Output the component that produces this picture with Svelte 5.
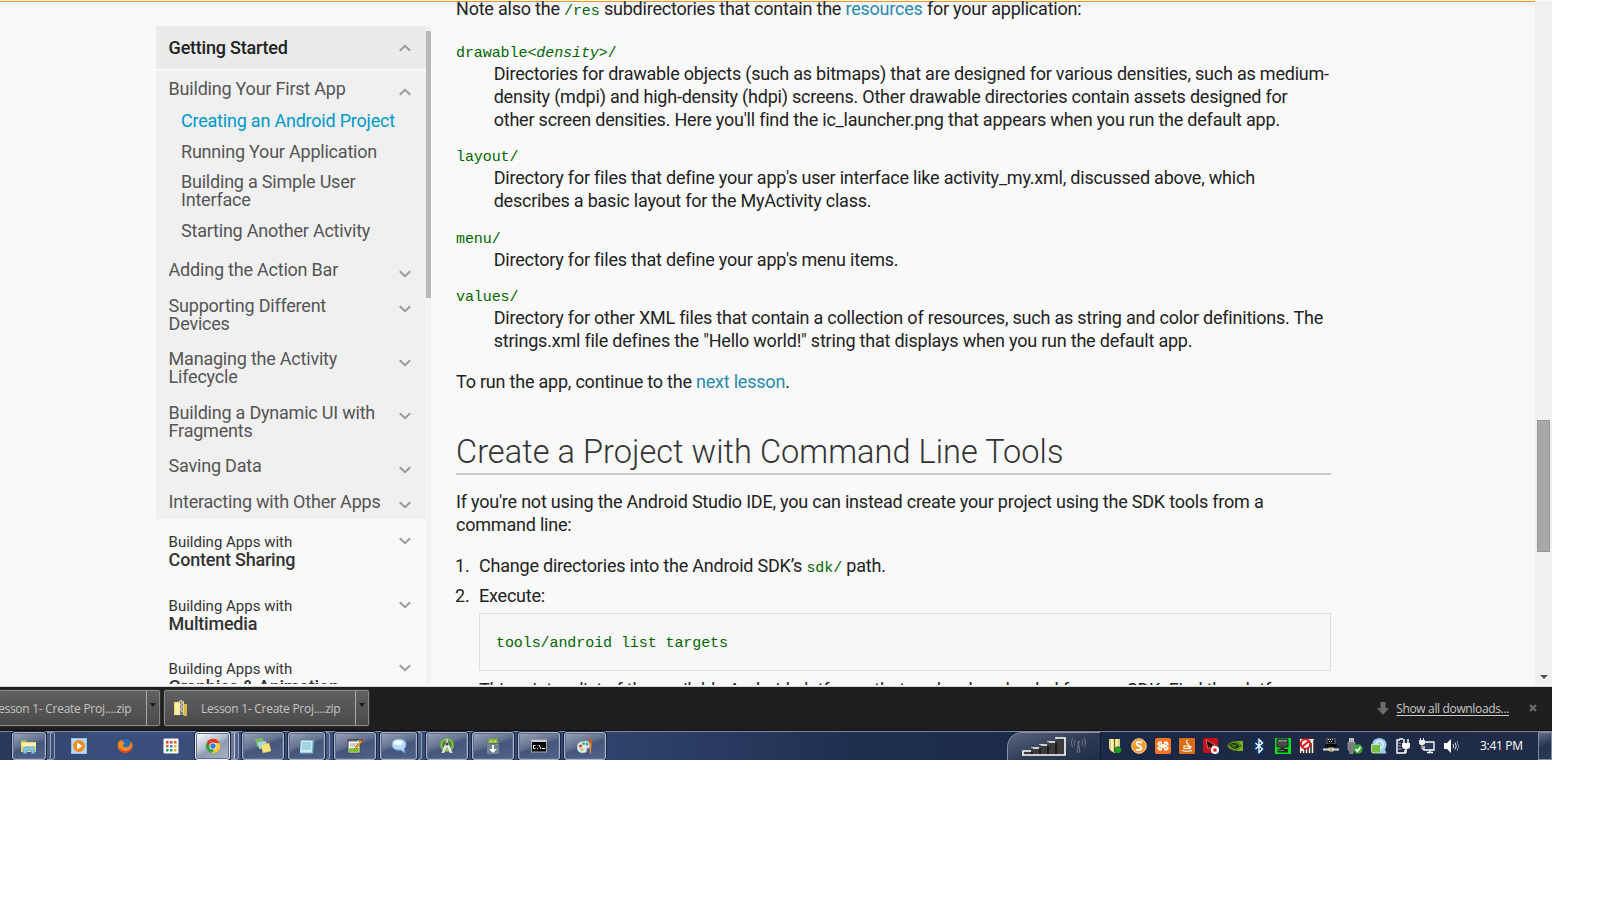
<script>
  const lessons = [
    { text: 'Creating an Android Project', active: true },
    { text: 'Running Your Application' },
    { text: 'Building a Simple User Interface' },
    { text: 'Starting Another Activity' }
  ];
  const topics = [
    'Adding the Action Bar',
    'Supporting Different Devices',
    'Managing the Activity Lifecycle',
    'Building a Dynamic UI with Fragments',
    'Saving Data',
    'Interacting with Other Apps'
  ];
  const sections = ['Content Sharing', 'Multimedia', 'Graphics & Animation'];

  const icons = {
    explorer: '<path d="M0 3h5l1 1h9v10H0z" fill="#e9d47c"/><path d="M1 2h4v2H1z" fill="#8fc25a"/><path d="M1 5h14v3H1z" fill="#fbf0b8"/><path d="M2.500 15.500v-4q0-2.500 2-2.500h7q2 0 2 2.500v4h-3v-3h-5v3z" fill="#7cc8f0" stroke="#4a9ccc" stroke-width=".6"/>',
    wmp: '<rect width="16" height="16" fill="#8fc3ea"/><rect x="1" y="1" width="14" height="14" fill="#b9dcf4"/><circle cx="8" cy="8" r="6" fill="#f58a1c"/><path d="M6 4.500l5.500 3.500L6 11.500z" fill="#fff"/>',
    firefox: '<circle cx="8" cy="8" r="7" fill="#e3641b"/><circle cx="8.500" cy="6" r="5.200" fill="#2b6db5"/><path d="M1 5Q3 1 5 3q2 1 3 3-3 0-2 2 2 2 5 1 3-2 3-6 3 5 0 9-4 4-9 2Q0 11 1 5z" fill="#f08a24"/><path d="M2 9q3 5 8 4 4-1 5-5 0 7-7 7-5 0-6-6z" fill="#d6401c"/>',
    apps: '<rect x=".5" y=".5" width="15" height="15" rx="1" fill="#fafafa"/><g><path d="M3 3h2.500v2.500H3zM7 3h2.500v2.500H7z" fill="#e53a2e"/><path d="M11 3h2.500v2.500H11zM3 7h2.500v2.500H3z" fill="#ec5b31"/><path d="M7 7h2.500v2.500H7z" fill="#3a7bea"/><path d="M11 7h2.500v2.500H11z" fill="#f2b51b"/><path d="M3 11h2.500v2.500H3zM7 11h2.500v2.500H7z" fill="#23a257"/><path d="M11 11h2.500v2.500H11z" fill="#f2b51b"/></g>',
    chrome: '<circle cx="8" cy="8" r="7.200" fill="#f6ca2c"/><path d="M1.800 4.400A7.200 7.200 0 0 1 14.600 5H8L5 9z" fill="#dc3c2d"/><path d="M1.800 4.400A7.200 7.200 0 0 0 7 15.100L10 10 6 10z" fill="#35a048"/><circle cx="8" cy="8" r="3.500" fill="#fff"/><circle cx="8" cy="8" r="2.700" fill="#3c79cf"/>',
    notes: '<path d="M0 1l8-1 1 7-7 2z" fill="#76bd68"/><path d="M3 4l8-1 1 7-8 1z" fill="#a8d4ee"/><path d="M6 7l8-2 2 8-8 2z" fill="#f4e47a" stroke="#d9c050" stroke-width=".5"/>',
    notepad: '<path d="M2 2h13l-1 13.500H1z" fill="#78b4c6"/><path d="M2 2h11.500l-.8 12.500H1z" fill="#c7edf5"/><path d="M3 5h9M3 7h9M3 9h9M3 11h9" stroke="#69aec3" stroke-width=".8"/><path d="M3 1v2M5 1v2M7 1v2M9 1v2M11 1v2M13 1v2" stroke="#587f8c" stroke-width=".8"/>',
    npp: '<rect x="1" y="2" width="12" height="13" fill="#fff" stroke="#444"/><path d="M2 1v3M4 1v3M6 1v3M8 1v3M10 1v3" stroke="#222" stroke-width=".8"/><path d="M3 6h8M3 8h7" stroke="#999"/><path d="M2 10h10v4H2z" fill="#7ec736"/><path d="M7 11l7-9 1.500 1-7 9z" fill="#f1b32d" stroke="#8a4a12" stroke-width=".5"/><path d="M13.500 2l1-2 1.500 1-1 2z" fill="#c62b24"/>',
    chat: '<path d="M8 1c5 0 7 2.500 7 5.500 0 2-1 3.500-2 4.300L14 15l-4-3C4 13 1 10 1 6.500 1 3 4 1 8 1z" fill="#b9dcfb" stroke="#6d9fd8"/><ellipse cx="7" cy="4.500" rx="4.500" ry="2.500" fill="#f2faff"/>',
    studio: '<circle cx="8" cy="7" r="7" fill="#79b944"/><circle cx="8" cy="7" r="4.500" fill="#507735"/><path d="M7 4h2l4.500 11h-2.500L8 9l-3 6H2.500z" fill="#eaeaea"/><path d="M7.200 1h1.600v3H7.200z" fill="#ddd"/><path d="M4 10q4 2.500 8 0" stroke="#ddd" fill="none"/><circle cx="8" cy="6" r="1.600" fill="#444"/>',
    sdk: '<path d="M3 5q0-4 5-4t5 4z" fill="#95c11f"/><path d="M4 0l1.500 2M12 0l-1.500 2" stroke="#95c11f"/><path d="M5.500 3h1v1h-1zM9.500 3h1v1h-1z" fill="#fff"/><rect x="2" y="6" width="12" height="10" fill="#6e8593"/><path d="M7 7h2v4h3l-4 4-4-4h3z" fill="#fff"/>',
    cmd: '<rect x=".5" y="2" width="15" height="12" fill="#050505" stroke="#aaa"/><path d="M1 2h14v2H1z" fill="#c9ccd4"/><path d="M4.500 7.500H2.500v3h2M6.500 7.500v.5M6.500 10v1M8 7l2 4M11 10.500h3" stroke="#fff" fill="none"/>',
    paint: '<path d="M8 3q6 0 6 5 0 3-3 2-2 0-1 2 0 3-4 3-6 0-6-6 0-6 8-6z" fill="#d8ebf4" stroke="#7ba9c0" stroke-width=".5"/><circle cx="3.500" cy="8" r="1.500" fill="#d33a2d"/><circle cx="6.500" cy="5.500" r="1.500" fill="#5bb446"/><circle cx="10" cy="6" r="1.500" fill="#3b8fd4"/><circle cx="5" cy="11.500" r="1.500" fill="#f0b52a"/><path d="M12.200 5h2.400L14 16h-1z" fill="#e5832b"/><path d="M12 1l1.500-1L15 1v4h-3z" fill="#b4602a"/>',
    shield: '<path d="M2 1h11v8q0 5-5 6-6-2-6-6z" fill="#e3cf7d"/><path d="M4 1h2v12H4zM9 1h1.500v9H9z" fill="#fff5c4"/><path d="M7 1h1v13H7z" fill="#7a6525"/><circle cx="11" cy="12" r="3.300" fill="#1ea02a" stroke="#085c10" stroke-width=".6"/>',
    sbadge: '<circle cx="8" cy="8" r="7.300" fill="#f79a2f" stroke="#ffd9a0"/><path d="M11 4.500Q6 3 5.500 5.500 5.500 7 8 8t2.500 2.500Q9.500 13 5 11.500" stroke="#fff" stroke-width="2" fill="none"/>',
    xampp: '<rect width="16" height="16" rx="2" fill="#f37623"/><rect x="2.500" y="3.500" width="11" height="9" rx="2.500" fill="#fff"/><path d="M7 3h2v3H7zM7 10h2v3H7zM2 7.300h2v1.400H2zM12 7.300h2v1.400h-2zM4.500 5.500h1.500v1.300H4.500zM10 5.500h1.500v1.300H10zM4.500 9.200h1.500v1.300H4.500zM10 9.200h1.500v1.300H10z" fill="#f37623"/>',
    java: '<rect width="16" height="16" rx="1" fill="#d96e19"/><path d="M8.500 2q-2 2 0 3.500t-.5 3M5 8h5v2.500H5zM10 8.500q3-.5 1.500 1.500L9.500 11M3 12.500q5 1.500 10 0" stroke="#fff" fill="none" stroke-width="1.100"/>',
    redcut: '<rect width="15" height="15" rx="2" fill="#c4121b"/><path d="M3 2l9 5-3 1 2 4-2 1-2-4-2 2z" fill="#260506" stroke="#ef8a8a" stroke-width=".7"/><circle cx="12" cy="12" r="4" fill="#fff"/><rect x="10.500" y="10.500" width="3" height="3" fill="#d11"/>',
    nvidia: '<path d="M7 3h9v10H7z" fill="#76b21a"/><path d="M0 8q3-5 8-5 4 1 6 5-3 4-6 5-5-1-8-5z" fill="#76b21a" stroke="#25351c" stroke-width=".7"/><path d="M2 8q5-6 10 0-5 5-8 0 4-3 6 0-3 2-4 0" stroke="#14240f" stroke-width="1.100" fill="none"/>',
    bt: '<ellipse cx="8" cy="8" rx="5.500" ry="7.800" fill="#0d3d6e"/><path d="M4.500 5l7 6-3.500 3.500V1.500L11.500 5l-7 6" stroke="#fff" stroke-width="1.300" fill="none"/>',
    monitor: '<rect width="16" height="16" fill="#0be21d"/><path d="M2 1h11v8H2z" fill="#4a4a4a" stroke="#222"/><path d="M3 2h9v1.500H3z" fill="#8a8a8a"/><path d="M5.500 9.500h4V11H13v3.500H2.500V11h3z" fill="#222"/><path d="M3 12h6v1H3z" fill="#777"/>',
    nosignal: '<rect x=".5" y=".5" width="15" height="15" fill="#f5f5f5" stroke="#333"/><path d="M3 15v-2M6 15v-4M9 15V8M12 15V5M15 15V2" stroke="#333" stroke-width="1.600"/><circle cx="6.500" cy="6" r="4.700" fill="#fff" stroke="#e01616" stroke-width="2"/><path d="M3 9l7-6" stroke="#e01616" stroke-width="2"/>',
    usbnet: '<path d="M4 0h8v6H4z" fill="#111" stroke="#aaa" stroke-width=".6"/><path d="M5 1h1v1H5zM7 1h1v1H7zM9 1h1v1H9zM6 3h1v1H6zM8 3h1v1H8z" fill="#fff"/><path d="M2 6h12v3H2z" fill="#070707"/><path d="M0 10.500h5l2-1h3l1 1h5v2h-5l-1 1H7l-2-1H0z" fill="#d9d9d9"/><path d="M7 10h2v3H7z" fill="#c7a640"/>',
    eject: '<path d="M2 0h5v4H2z" fill="#bbb"/><path d="M1 4h7v7q0 2-2 2v3H3v-3q-2 0-2-2z" fill="#7c7c7c" stroke="#aaa" stroke-width=".6"/><circle cx="11" cy="11" r="4.700" fill="#38a838"/><path d="M8.500 11l2 2.300 3-4.300" stroke="#fff" stroke-width="1.500" fill="none"/>',
    sync: '<path d="M8 0q7 0 7.500 6.500 0 3-1.500 5l1.500 4H9L1 7Q1 1 8 0z" fill="#9dcaf0"/><circle cx="8.500" cy="6.500" r="3.600" fill="none" stroke="#e9f6ff" stroke-width="1.500"/><path d="M0.500 6.500h8q1 0 1 1v6q0 1.500-1 1.500H2q-1.500 0-1.500-1.500z" fill="#76bd48" stroke="#d8f0c0" stroke-width=".8"/>',
    power: '<path d="M5 2H2v13h8v-3M4 1h4" stroke="#fff" stroke-width="1.400" fill="none"/><path d="M3 5h3M3 8h3M3 11h4" stroke="#aaa"/><path d="M7 5h8v3q0 3-3 3h-2q-3 0-3-3z" fill="#fff"/><path d="M9 1v4M13 1v4M11 11v4" stroke="#fff" stroke-width="1.500"/>',
    network: '<path d="M5 4h10v8H5V8" stroke="#fff" stroke-width="1.300" fill="#26375a"/><path d="M8 14.500h6M11 12v2" stroke="#fff" stroke-width="1.300"/><path d="M0 2h6v3q0 2-3 2t-3-2zM1 0h1v2H1zM4 0h1v2H4z" fill="#eee"/><path d="M3 7v4h2" stroke="#fff" fill="none"/>',
    volume: '<path d="M1 5h3l4-4v14l-4-4H1z" fill="#fff"/><path d="M10 6q1.500 2 0 4M12 4.500q2.500 3.500 0 7" stroke="#ddd" fill="none"/><path d="M14 3q3 5 0 10" stroke="#7c88a0" fill="none"/>',
    zip: '<path d="M1 2h4l1-1h5v14H1z" fill="#f3d86c"/><path d="M2 3h5v12H2z" fill="#fbeda1"/><path d="M11 4h3v12h-3z" fill="#d8b64a"/><path d="M7 0h3v15H7z" fill="#78808a"/><path d="M7 1h2M8 3h2M7 5h2M8 7h2M7 9h2M8 11h2" stroke="#e8e8e8"/>'
  };

  const buttons = [
    { icon: 'explorer', w: 34, gap: 12, stack: 'two' },
    { icon: 'wmp', w: 46, gap: 1, flat: true },
    { icon: 'firefox', w: 46, gap: 0, flat: true },
    { icon: 'apps', w: 46, gap: 0, flat: true },
    { icon: 'chrome', w: 35, gap: 1, stack: 'two', hot: true },
    { icon: 'notes', w: 42, gap: 3 },
    { icon: 'notepad', w: 37, gap: 4, stack: 'one' },
    { icon: 'npp', w: 42, gap: 4 },
    { icon: 'chat', w: 37, gap: 4, stack: 'one' },
    { icon: 'studio', w: 42, gap: 4 },
    { icon: 'sdk', w: 42, gap: 4 },
    { icon: 'cmd', w: 42, gap: 4 },
    { icon: 'paint', w: 42, gap: 4 }
  ];
  const tray = ['shield', 'sbadge', 'xampp', 'java', 'redcut', 'nvidia', 'bt', 'monitor', 'nosignal', 'usbnet', 'eject', 'sync', 'power', 'network', 'volume'];
</script>

{#snippet icon(name)}
  <svg class="icon" viewBox="0 0 16 16">{@html icons[name]}</svg>
{/snippet}

{#snippet chevron(up)}
  <svg class="chevron" class:up viewBox="0 0 12 8"><path d="M.8 1.300L6 6.200l5.200-4.900" /></svg>
{/snippet}

<div class="screen">
  <div class="browser">
    <nav>
      <div class="toc">
        <div class="head"><b>Getting Started</b>{@render chevron(true)}</div>
        <div class="open">
          <div class="topic first"><span>Building Your First App</span>{@render chevron(true)}</div>
          <ul>
            {#each lessons as l}
              <li class:active={l.active}>{l.text}</li>
            {/each}
          </ul>
          {#each topics as t}
            <div class="topic"><span>{t}</span>{@render chevron(false)}</div>
          {/each}
        </div>
        {#each sections as s}
          <div class="section">
            <div><small>Building Apps with</small><b>{s}</b></div>
            {@render chevron(false)}
          </div>
        {/each}
      </div>
      <div class="track"><div class="thumb"></div></div>
    </nav>

    <main>
      <p class="note">Note also the <code>/res</code> subdirectories that contain the <a>resources</a> for your application:</p>
      <dl>
        <dt>drawable<em>&lt;density&gt;</em>/</dt>
        <dd>Directories for drawable objects (such as bitmaps) that are designed for various densities, such as medium-<br />density (mdpi) and high-density (hdpi) screens. Other drawable directories contain assets designed for<br />other screen densities. Here you'll find the ic_launcher.png that appears when you run the default app.</dd>
        <dt>layout/</dt>
        <dd class="wide">Directory for files that define your app's user interface like activity_my.xml, discussed above, which<br />describes a basic layout for the MyActivity class.</dd>
        <dt>menu/</dt>
        <dd>Directory for files that define your app's menu items.</dd>
        <dt>values/</dt>
        <dd>Directory for other XML files that contain a collection of resources, such as string and color definitions. The<br />strings.xml file defines the "Hello world!" string that displays when you run the default app.</dd>
      </dl>
      <p class="run">To run the app, continue to the <a>next lesson</a>.</p>
      <h2>Create a Project with Command Line Tools</h2>
      <p class="intro">If you're not using the Android Studio IDE, you can instead create your project using the SDK tools from a<br />command line:</p>
      <div class="step"><i>1.</i><span>Change directories into the Android SDK’s <code>sdk/</code> path.</span></div>
      <div class="step"><i>2.</i><span>Execute:</span></div>
      <pre>tools/android list targets</pre>
      <p class="tail">This prints a list of the available Android platforms that you’ve downloaded for your SDK. Find the platform</p>
    </main>

    <div class="scrollbar">
      <div class="grip"></div>
      <svg viewBox="0 0 8 4"><path d="M0 0h8L4 4z" fill="#505050" /></svg>
    </div>
  </div>

  <div class="downloads">
    <div class="item cut">
      <span class="file">Lesson 1- Create Proj....zip</span>
      <span class="drop"><svg viewBox="0 0 6 4"><path d="M0 0h6L3 4z" fill="#1c1c1c" /></svg></span>
    </div>
    <div class="item">
      {@render icon('zip')}
      <span class="file">Lesson 1- Create Proj....zip</span>
      <span class="drop"><svg viewBox="0 0 6 4"><path d="M0 0h6L3 4z" fill="#1c1c1c" /></svg></span>
    </div>
    <div class="all">
      <svg class="arrow" viewBox="0 0 12 13"><path d="M3.500 0h5v6H12l-6 7-6-7h3.500z" fill="#6b6b6b" /></svg>
      <u>Show all downloads...</u>
      <svg class="close" viewBox="0 0 8 8"><path d="M1 1l6 6M7 1L1 7" stroke="#6e6e6e" stroke-width="2.200" /></svg>
    </div>
  </div>

  <div class="taskbar">
    {#each buttons as b}
      <div class="btn" class:flat={b.flat} class:hot={b.hot} style:width="{b.w}px" style:margin-left="{b.gap}px">{@render icon(b.icon)}</div>
      {#if b.stack}<div class="stack {b.stack}" class:hot={b.hot}></div>{/if}
    {/each}
    <div class="signal">
      <svg class="bars" viewBox="0 0 44 19">
        <path d="M1 18v-4h9v-3h8V8h8V5h8V1h9v17z" fill="#3a3a3a" stroke="#fff" stroke-width="1.600" />
        <path d="M10 11v6M18 8v9M26 5v12M34 2v15" stroke="#111" stroke-width="1.500" />
      </svg>
      <svg class="antenna" viewBox="0 0 16 16"><path d="M8 6l-1.500 9.500h3zM4.500 2.500q-2 3 0 6M11.500 2.500q2 3 0 6M2 .5q-3 5 0 10M14 .5q3 5 0 10" stroke="#68707c" stroke-width="1.100" fill="none" /><circle cx="8" cy="5" r="1.500" fill="#68707c" /></svg>
    </div>
    <div class="tray">
      {#each tray as t}{@render icon(t)}{/each}
    </div>
    <div class="clock">3:41 PM</div>
    <div class="desktop"></div>
  </div>
</div>

<style>
  :global(body) { background: #fff; overflow: hidden; }
  .screen { width: 1552px; height: 760px; display: flex; flex-direction: column; overflow: hidden; }
  .browser {
    height: 684px; flex: none; overflow: hidden; display: flex;
    background: linear-gradient(#efefef, #f9f9f9 6px);
    border-top: 1px solid #f9f9f9; box-shadow: inset 0 1px #f7941d;
    border-bottom: 1px solid #f9f9f9;
    font: 18px/23px Roboto, sans-serif; color: #222; letter-spacing: -.215px;
  }
  nav { margin: 25px 0 0 156px; width: 275px; height: 658px; display: flex; overflow: hidden; flex: none; line-height: 18px; }
  .toc { width: 270px; overflow: hidden; color: #555; }
  .track { width: 5px; background: #f3f3f3; padding-top: 5px; box-sizing: border-box; }
  .thumb { height: 267px; background: #b8b8b8; }
  b { font-weight: 500; color: #333; }
  .head, .topic, .section { display: flex; justify-content: space-between; box-sizing: border-box; }
  .head { height: 43px; padding: 13px 15px 0 12.600px; background: #ebebeb; margin-bottom: 2px; }
  .head b { color: #222; }
  .open { height: 448px; background: #f0f0f0; }
  .topic { padding: 8.770px 15px 8.770px 12.600px; }
  .topic span { width: 218px; }
  .topic.first { padding: 9px 15px 14px 12.600px; }
  ul { list-style: none; margin: 0; padding: 0 20px 0 25px; }
  li { padding-bottom: 12.600px; }
  li.active { color: #09c; }
  .chevron { width: 12px; height: 8px; margin-top: 8.700px; flex: none; fill: none; stroke: #999; stroke-width: 2; }
  .first .chevron { margin-top: 7.500px; }
  .head .chevron { margin-top: 5px; }
  .chevron.up { transform: scaleY(-1); }
  .section { height: 63.500px; padding: 14px 15px 0 12.600px; }
  .section small { display: block; font-size: 15px; line-height: 18px; color: #333; letter-spacing: 0; }
  .section b { display: block; }
  .section .chevron { margin-top: 4px; }

  main { width: 875px; margin: -4px 0 0 25px; flex: none; white-space: nowrap; }
  p, dl, dd, h2, pre { margin: 0; }
  a { color: #258aaf; }
  code, dt, pre { font: 15px/19px "Liberation Mono", monospace; color: #060; letter-spacing: -.08px; }
  code { line-height: 0; }
  .note { height: 46px; }
  dt { height: 19px; line-height: 21px; }
  dd { margin: 0 0 16px 37.700px; }
  dd.wide { margin-bottom: 17px; }
  .run { padding-top: 2px; }
  h2 { font-weight: 300; font-size: 32.500px; line-height: 42px; height: 42px; margin-top: 38px; border-bottom: 2px solid #ccc; color: #333; letter-spacing: .05px; }
  .intro { margin: 15px 0 18px; }
  .step { display: flex; height: 30px; }
  .step i { font-style: normal; width: 24px; margin-left: -1px; }
  pre { margin: -1px 0 7px 23px; height: 58px; box-sizing: border-box; border: 1px solid #ddd; background: #f7f7f7; padding: 20px 16px; }
  .tail { margin-left: 23px; }

  .scrollbar { width: 17px; margin-left: auto; background: #f0f0f0; display: flex; flex-direction: column; align-items: center; }
  .grip { width: 13px; height: 132px; box-sizing: border-box; margin-top: 419px; background: #a8a8a8; border: 1px solid #989898; }
  .scrollbar svg { width: 8px; height: 4px; margin-top: 123px; }

  .icon { width: 16px; height: 16px; flex: none; display: block; }
  .downloads { height: 45px; flex: none; box-sizing: border-box; background: #1e1e1e; border-top: 1px solid #d5d8d8; display: flex; padding-top: 3px; font: 12px/16px "Open Sans", sans-serif; }
  .item {
    width: 205px; height: 36px; margin-left: 4px; box-sizing: border-box; display: flex; align-items: center; flex: none;
    border: 1px solid #888; border-radius: 2px; background: linear-gradient(#606060, #505050 75%, #494949); color: #c3c3c3;
    padding-left: 8px; box-shadow: 0 0 0 1px #2e2e2e; white-space: nowrap;
  }
  .item.cut { width: 161px; margin-left: -1px; padding-left: 0; border-left: 0; }
  .item.cut .file { margin-left: -7px; }
  .file { margin-left: 12px; padding-top: 2px; letter-spacing: -.27px; }
  .drop { width: 12px; height: 34px; margin-left: auto; border-left: 1px solid #aaa; display: flex; justify-content: center; }
  .drop svg { width: 6px; height: 4px; margin-top: 12px; }
  .all { margin-left: auto; padding: 11px 15px 0 0; display: flex; height: 18px; color: #c8c8c8; }
  .all u { text-underline-offset: 2px; letter-spacing: -.35px; }
  .arrow { width: 12px; height: 13px; margin: 1px 7px 0 0; }
  .close { width: 8px; height: 8px; margin: 3px 0 0 20px; }

  .taskbar {
    height: 29px; flex: none; box-sizing: border-box; display: flex; align-items: stretch; border-top: 1px solid #7d8ba4;
    background: linear-gradient(90deg, #27385a, #3b4f7c 6%, #3a4d79 30%, #2d4068 42%, #1f2f50 55%, #1b2845 75%, #202c48 100%);
    box-shadow: 0 -1px #111;
  }
  .btn {
    box-sizing: border-box; flex: none; display: flex; align-items: center; justify-content: center;
    border: 1px solid #a8b3c8; border-radius: 3px; box-shadow: inset 0 0 0 1px #5f6f90, 0 0 0 1px #1b2740;
    background: linear-gradient(160deg, #9ba5b9, #64718f 42%, #45567b 52%, #526289);
  }
  .btn.flat { border-color: transparent; background: none; box-shadow: none; }
  .btn.hot { background: linear-gradient(150deg, #fff, #b4bccb 45%, #8f9bb2 55%, #a9b3c5); border-color: #eef1f6; }
  .stack { flex: none; box-sizing: border-box; width: 4px; margin-left: 1px; border: 1px solid #93a0b8; border-left: 0; border-radius: 0 3px 3px 0; background: #4a5b80; }
  .stack.two { width: 8px; background: linear-gradient(90deg, #4a5b80 3px, #93a0b8 3px 4px, #3d4f78 4px); }
  .stack.hot { background: linear-gradient(90deg, #6d7b99 3px, #c3cad8 3px 4px, #51638b 4px); }
  .signal { width: 94px; margin-left: auto; box-sizing: border-box; border-left: 1px solid #8590a5; border-top: 1px solid #8590a5; border-right: 1px solid #111b30; border-top-left-radius: 15px; background: linear-gradient(160deg, #5a6580, #323d58 50%, #202c49); display: flex; padding: 4px 0 0 14px; }
  .bars { width: 44px; height: 19px; }
  .antenna { width: 15px; height: 16px; margin-left: 5px; }
  .tray { width: 352px; display: flex; justify-content: space-between; align-items: center; margin-left: 6px; }
  .clock { font: 12px/28px "Open Sans", sans-serif; color: #fff; letter-spacing: -.3px; width: 58px; margin-left: 21px; white-space: nowrap; }
  .desktop { width: 14px; box-sizing: border-box; border: 1px solid #7e8ba4; background: linear-gradient(160deg, #65708a, #27334f 50%, #2c3855); }
</style>
